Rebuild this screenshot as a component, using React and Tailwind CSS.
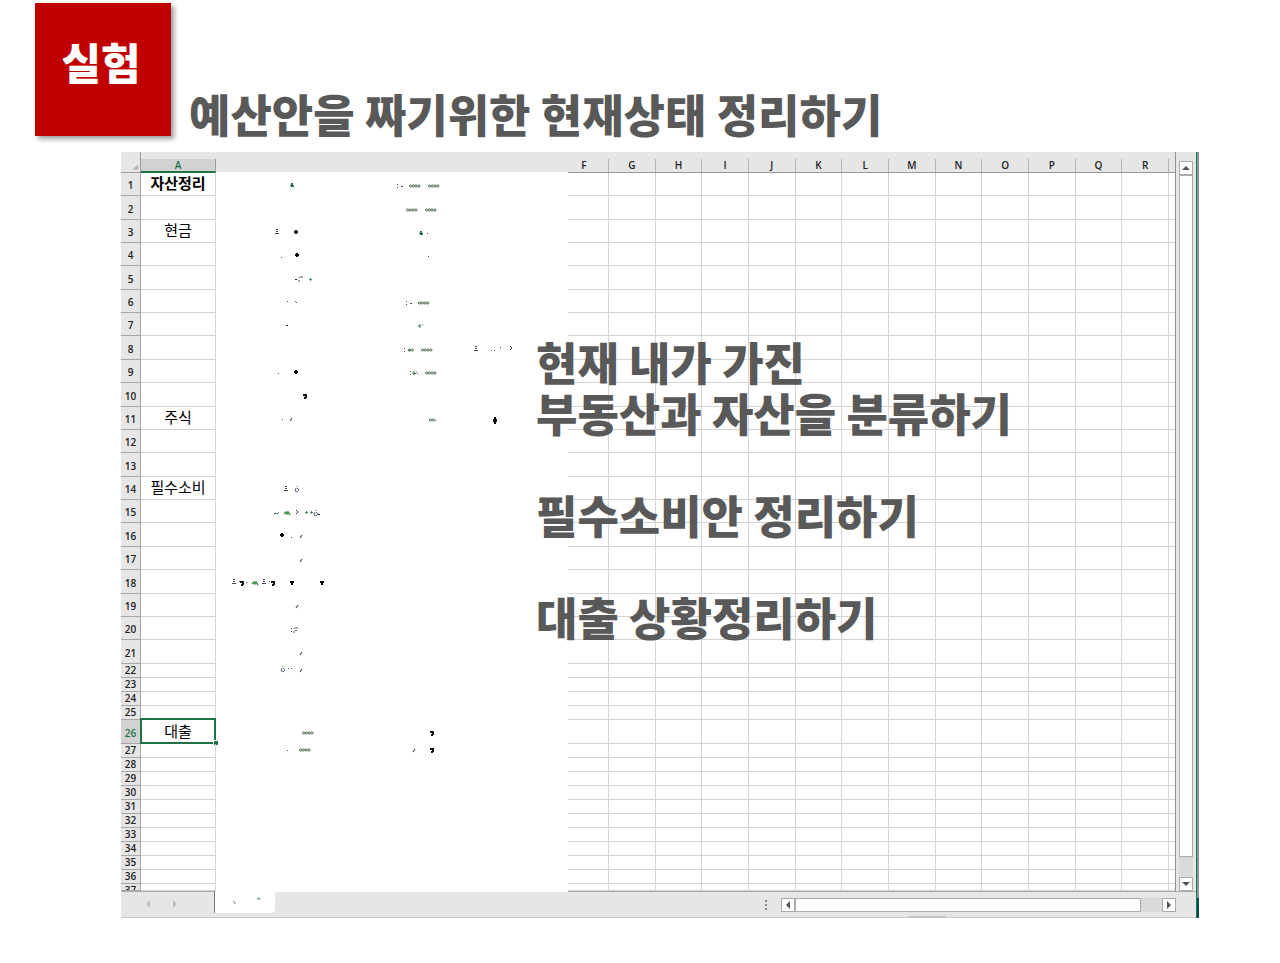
import React from "react";

const COLUMNS = ["G", "H", "I", "J", "K", "L", "M", "N", "O", "P", "Q", "R"];

const LABELS = {
  1: "자산정리",
  3: "현금",
  11: "주식",
  14: "필수소비",
  26: "대출",
};

const SELECTED_ROW = 26;

const ROWS = Array.from({ length: 37 }, (_, i) => i + 1);

const NOTES = [
  ["현재 내가 가진", "부동산과 자산을 분류하기"],
  ["필수소비안 정리하기"],
  ["대출 상황정리하기"],
];

// what is left of the erased figures in columns B to E: [kind, x, y]
const MARKS = [
  ["figure", 292, 185],
  ["colon", 397, 186], ["coins", 409, 186], ["coins", 428, 186],
  ["coins", 406, 210], ["coins", 425, 210],
  ["peak", 277, 232], ["spade", 296, 232], ["figure", 421, 233], ["dot", 427, 233],
  ["dot", 281, 257], ["spade", 297, 255], ["dot", 428, 256],
  ["dash", 295, 279], ["fork", 300, 279], ["plus", 310, 279],
  ["dot", 287, 301], ["tick", 296, 302], ["colon", 406, 303], ["coins", 418, 303],
  ["dash", 286, 325], ["cee", 420, 326],
  ["colon", 404, 350], ["pair", 408, 350], ["coins", 421, 350],
  ["peak", 476, 349], ["dot", 491, 350], ["dot", 494, 350], ["dot", 500, 347], ["angle", 511, 348],
  ["dot", 278, 373], ["spade", 296, 372], ["colon", 410, 373], ["cee", 414, 373], ["dot", 417, 373], ["coins", 425, 373],
  ["nine", 305, 396],
  ["dot", 282, 419], ["slash", 291, 419], ["pair", 429, 420], ["dot", 435, 420], ["bigSpade", 495, 420],
  ["peak", 286, 489], ["bell", 297, 489],
  ["tail", 277, 513], ["leaf", 287, 513], ["angle", 297, 512], ["plus", 306, 512], ["plus", 311, 512], ["bell", 316, 513], ["dash", 318, 514],
  ["spade", 282, 535], ["dot", 291, 537], ["slash", 301, 536],
  ["slash", 301, 560],
  ["peak", 234, 582], ["dot", 239, 581], ["nine", 242, 583], ["dot", 246, 582], ["leaf", 255, 583],
  ["peak", 264, 582], ["dot", 269, 581], ["nine", 273, 583], ["tee", 292, 583], ["tee", 322, 583],
  ["slash", 297, 606],
  ["colon", 291, 630], ["fork", 295, 630],
  ["slash", 301, 653],
  ["bell", 283, 669], ["dot", 288, 668], ["dot", 291, 668], ["slash", 301, 670],
  ["coins", 302, 733], ["nine", 432, 733],
  ["dot", 287, 750], ["coins", 299, 750], ["slash", 414, 750], ["nine", 432, 750],
];

const Mark = ({ kind, x, y }) => {
  const at = `translate(${x} ${y})`;
  switch (kind) {
    case "coins":
    case "pair":
      return (
        <g transform={at} fill="none" stroke="#3f6343" strokeWidth="0.9">
          <circle cx="1.5" cy="0" r="1.1" />
          <circle cx="4.3" cy="0" r="1.1" />
          {kind === "coins" && <circle cx="7.1" cy="0" r="1.1" />}
          {kind === "coins" && <circle cx="9.9" cy="0" r="1.1" />}
        </g>
      );
    case "spade":
      return <path transform={at} fill="#000" d="M-1-2h2v1h1v2H1v1h-2V1h-1v-2h1z" />;
    case "bigSpade":
      return <path transform={at} fill="#000" d="M-1-3h2v2h1v3H1v2h-2V2h-1v-3h1z" />;
    case "nine":
      return <path transform={at} fill="#0b160d" d="M-2-2h4v4H1v1H-1V1h1V0h-2z" />;
    case "tee":
      return <path transform={at} fill="#000" d="M-2-2h4v2H1v2h-2V0h-1z" />;
    case "peak":
      return <path transform={at} fill="#3c4450" d="M-1-3h2v1h-2zM-1-1h2v1h-2zM-2 1h4v1h-4z" />;
    case "figure":
      return <path transform={at} fill="#287047" d="M-1-2h2v2h1v2h-3V1h-1V0h1z" />;
    case "bell":
      return <path transform={at} fill="none" stroke="#5c6c88" d="M0-3v1M-1-1l-1 3 2 1 2-2-2-2" />;
    case "leaf":
      return <path transform={at} fill="none" stroke="#3e8a48" strokeWidth="1.4" d="M-3 1l2-2 1 2 1-2 2 3" />;
    case "tail":
      return <path transform={at} fill="none" stroke="#466d5c" d="M-3 1l2-1 1 1 2-2" />;
    case "slash":
      return <path transform={at} fill="none" stroke="#5d4560" strokeWidth="1.2" d="M-1 2l2-3" />;
    case "fork":
      return <path transform={at} fill="none" stroke="#5a5660" d="M-1-2v1M-1 1v2M0-2h3" />;
    case "angle":
      return <path transform={at} fill="none" stroke="#31453a" d="M-1-2l2 2-2 2" />;
    case "cee":
      return <path transform={at} fill="none" stroke="#33774b" d="M1-1h-2v2h2M2-1h1" />;
    case "tick":
      return <path transform={at} fill="none" stroke="#33774b" d="M-1-1l2 2" />;
    case "colon":
      return <path transform={at} fill="#365c44" d="M0-2h1v1H0zM0 1h1v1H0zM4 0h2v1H4z" />;
    case "plus":
      return <path transform={at} fill="#4d9160" d="M0-1h1v1h1v1H1v1H0V1h-1V0h1z" />;
    case "dash":
      return <path transform={at} fill="#222" d="M0 0h2v1H0z" />;
    default:
      return <path transform={at} fill="#40604d" d="M0 0h1v1H0z" />;
  }
};

const rowHeight = (row) => {
  if (row === 37) return "h-[7px]";
  if (row === SELECTED_ROW) return "h-[24px]";
  if (row > 21) return "h-[14px]";
  // tall rows alternate between 23 and 24
  return [2, 5, 0].includes(row % 8) ? "h-[24px]" : "h-[23px]";
};

const Arrow = ({ d }) => (
  <svg viewBox="0 0 8 8" className="h-2 w-2" fill="#555">
    <path d={d} />
  </svg>
);

const ScrollButton = ({ label, d }) => (
  <button
    type="button"
    aria-label={label}
    className="flex h-[14px] w-[14px] shrink-0 items-center justify-center border border-[#ababab] bg-white"
  >
    <Arrow d={d} />
  </button>
);

const ColumnHead = ({ name }) => (
  <th className="h-[21px] border-b border-[#9b9b9b] bg-[#e6e6e6] p-0 align-bottom font-semibold">
    <div className={`h-[13px] border-r border-[#b5b5b5] leading-[13px] ${name === "F" ? "pr-2" : ""}`}>{name}</div>
  </th>
);

const SheetTable = () => (
  <table className="w-full table-fixed border-separate border-spacing-0 border-r border-[#8f8f8f] text-center font-['Open_Sans',sans-serif] text-[10px] text-[#222]">
    <colgroup>
      <col className="w-[20px]" />
      <col className="w-[75px]" />
      <col className="w-[352px]" />
      <col className="w-[41px]" />
      {COLUMNS.map((name) => (
        <col key={name} />
      ))}
      <col className="w-[6px]" />
    </colgroup>
    <thead>
      <tr>
        <th className="h-[21px] border-b border-r border-[#9b9b9b] bg-[#e6e6e6] p-0 align-bottom">
          <svg viewBox="0 0 20 10" className="h-[10px] w-full" fill="#b4b4b4">
            <path d="M18 2v6h-6z" />
          </svg>
        </th>
        <th className="bg-[#e6e6e6] p-0 align-bottom font-semibold text-[#217346]">
          <div className="h-[14px] border-r border-b-2 border-r-[#9b9b9b] border-b-[#217346] bg-[#d2d2d2] leading-[13px]">A</div>
        </th>
        <th className="border-b border-white bg-[#e6e6e6] p-0" aria-label="B to E" />
        <ColumnHead name="F" />
        {COLUMNS.map((name) => (
          <ColumnHead key={name} name={name} />
        ))}
        <th className="border-b border-[#9b9b9b] bg-[#e6e6e6] p-0" aria-label="S" />
      </tr>
    </thead>
    <tbody>
      {ROWS.map((row) => {
        const selected = row === SELECTED_ROW;
        return (
          <tr key={row} className={rowHeight(row)}>
            <th
              scope="row"
              className={`border-r border-b border-[#a6a6a6] p-0 font-semibold ${
                selected ? "bg-[#d2d2d2] text-[#217346]" : "bg-[#e6e6e6]"
              } ${row === 37 ? "align-top" : row > 21 && !selected ? "align-middle" : "align-bottom"}`}
            >
              <div
                className={`overflow-hidden leading-[13px] ${
                  row === 37 ? "h-[6px]" : row > 21 && !selected ? "h-[13px]" : "h-[16px]"
                }`}
              >
                {row}
              </div>
            </th>
            <td
              className={`relative border-r border-b border-[#d4d4d4] p-0 font-['Noto_Sans_CJK_KR',sans-serif] text-[15px] leading-[13px] text-black ${
                row === 1 ? "font-bold" : ""
              } ${LABELS[row] ? "pb-[3px]" : ""}`}
            >
              {LABELS[row]}
              {selected && (
                <span className="absolute -top-[2px] -right-px -bottom-px -left-px border-2 border-[#217346]">
                  <span className="absolute -right-[4px] -bottom-[3px] h-[5px] w-[5px] border-t border-l border-white bg-[#217346]" />
                </span>
              )}
            </td>
            {row === 1 && (
              <td rowSpan={ROWS.length} className="bg-white p-0 align-top">
                <svg viewBox="216 173 352 700" className="block h-[700px] w-[352px]" aria-hidden="true">
                  {MARKS.map(([kind, x, y]) => (
                    <Mark key={`${x}-${y}`} kind={kind} x={x} y={y} />
                  ))}
                </svg>
              </td>
            )}
            <td className="border-r border-b border-[#d4d4d4] p-0" />
            {COLUMNS.map((name) => (
              <td key={name} className="border-r border-b border-[#d4d4d4] p-0" />
            ))}
            <td className="border-b border-[#d4d4d4] p-0" />
          </tr>
        );
      })}
    </tbody>
  </table>
);

const VerticalScroll = () => (
  <div className="flex w-5 shrink-0 flex-col items-center bg-[#e6e6e6] pt-[9px]">
    <ScrollButton label="Scroll up" d="M4 2l4 4H0z" />
    <div className="flex w-[14px] flex-1 flex-col bg-[#dadada]">
      <div className="flex-1 border border-[#ababab] bg-white" />
      <div className="h-5" />
    </div>
    <ScrollButton label="Scroll down" d="M0 2h8L4 6z" />
  </div>
);

const BottomBar = () => (
  <div className="flex h-[27px] border-b border-[#cacaca] bg-[#e6e6e6]">
    <div className="flex w-[93px] items-center justify-center gap-[19px] border-t border-[#ababab] pr-3 pb-[2px]">
      <button type="button" aria-label="Previous sheet">
        <svg viewBox="0 0 8 8" className="h-2 w-2" fill="#bdbdbd">
          <path d="M6 0v8L2 4z" />
        </svg>
      </button>
      <button type="button" aria-label="Next sheet">
        <svg viewBox="0 0 8 8" className="h-2 w-2" fill="#bdbdbd">
          <path d="M2 0l4 4-4 4z" />
        </svg>
      </button>
    </div>
    <button
      type="button"
      aria-label="Sheet"
      className="h-[22px] w-[61px] rounded-br-sm border-l border-[#777] bg-white"
    >
      <svg viewBox="214 891 60 22" className="h-[22px] w-[60px]" fill="none">
        <path d="M232 901l1 1M233 903h2" stroke="#5a7a4a" />
        <path d="M256 899l2-1 1 2" stroke="#3b8a4a" />
      </svg>
    </button>
    <div className="w-[293px] border-t border-white" />
    <div className="flex flex-1 items-center justify-end border-t border-[#ababab] pr-5">
      <svg viewBox="0 0 2 12" className="mr-[14px] h-3 w-[2px]" fill="#8a8a8a">
        <path d="M0 1h2v2H0zM0 5h2v2H0zM0 9h2v2H0z" />
      </svg>
      <div className="flex w-[395px]">
        <ScrollButton label="Scroll left" d="M6 0v8L2 4z" />
        <div className="flex flex-1 bg-[#dadada]">
          <div className="flex-1 border border-[#ababab] bg-white" />
          <div className="w-[21px]" />
        </div>
        <ScrollButton label="Scroll right" d="M2 0l4 4-4 4z" />
      </div>
    </div>
  </div>
);

const App = () => {
  return (
    <main className="min-h-screen bg-white font-['Noto_Sans_CJK_KR',sans-serif]">
      <header className="flex items-end gap-[18px] pt-[3px] pl-[35px]">
        <div className="flex h-[133px] w-[136px] shrink-0 items-center justify-center bg-[#c00000] pr-1 pb-4 text-[43px] leading-[51px] font-black text-white shadow-[3px_3px_5px_rgba(0,0,0,0.4)]">
          실험
        </div>
        <h1 className="text-[45px] leading-[45px] font-black whitespace-nowrap text-[#595959]">
          예산안을 짜기위한 현재상태 정리하기
        </h1>
      </header>

      <section className="relative mt-4 mr-[81px] ml-[121px] flex">
        <div className="min-w-0 flex-1">
          <div className="flex">
            <div className="min-w-0 flex-1">
              <SheetTable />
            </div>
            <VerticalScroll />
          </div>
          <BottomBar />
        </div>
        <div className="flex w-[3px] shrink-0 flex-col border-l border-[#217346] bg-[#8496a0]">
          <div className="flex-1" />
          <div className="h-5 bg-[#004b57]" />
        </div>

        <div className="absolute top-[184px] left-[415px] flex flex-col gap-[51px] text-[45px] leading-[51px] font-black whitespace-nowrap text-[#595959]">
          {NOTES.map((lines) => (
            <div key={lines[0]}>
              {lines.map((line) => (
                <p key={line}>{line}</p>
              ))}
            </div>
          ))}
        </div>
        <span className="absolute right-[253px] bottom-0 h-[2px] w-[38px] bg-[#c4c4c4]" />
      </section>
    </main>
  );
};

export default App;
